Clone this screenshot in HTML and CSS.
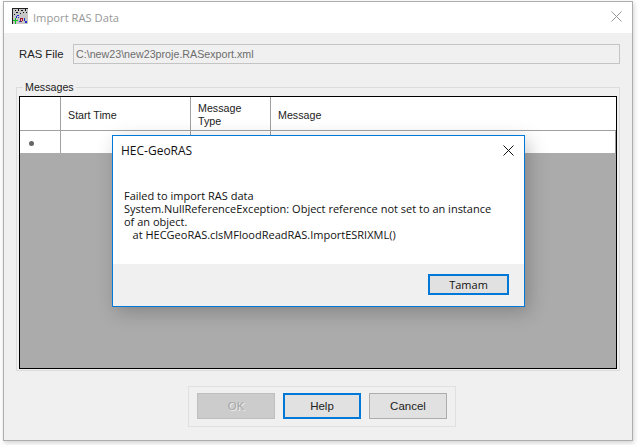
FILE: index.html
```html
<!DOCTYPE html>
<html lang="en">
<head>
<meta charset="utf-8">
<title>Import RAS Data</title>
<link rel="stylesheet" href="styles.css">
</head>
<body>
<div class="window">
  <header class="titlebar">
    <svg class="app-icon" viewBox="0 0 16 16" width="16" height="16" aria-hidden="true">
      <rect x="0" y="0" width="16" height="16" fill="#c6c6c6"/>
      <path d="M0 0h16v1H0zM0 0h1v16H0z" fill="#222"/>
      <path d="M3 2h1v1H3zM6 1h1v2H6zM9 2h2v1H9zM13 1h1v2h-1zM4 4h2v1H4zM11 4h1v1h-1zM14 4h1v1h-1zM8 5h1v1H8zM2 6h1v1H2z" fill="#111"/>
      <path d="M5 7h2v1H5zM4 8h1v2H4zM6 9h1v1H6zM12 10h1v3h-1zM13 13h2v2h-2zM7 13h2v1H7z" fill="#1c2fc8"/>
      <path d="M8 10h3v1H8zM8 11h1v2H8zM10 11h1v2h-1zM9 13h1v1H9z" fill="#b01030"/>
      <path d="M3 10h1v6H3zM1 12h5v1H1z" fill="#10c020"/>
    </svg>
    <span class="title">Import RAS Data</span>
    <svg class="close" viewBox="0 0 11 11" width="11" height="11" aria-hidden="true">
      <path d="M.5.5l10 10M10.5.5l-10 10" stroke="#999" fill="none"/>
    </svg>
  </header>
  <main class="content">
    <div class="file-row">
      <label class="file-label">RAS File</label>
      <div class="file-input">C:\new23\new23proje.RASexport.xml</div>
    </div>
    <fieldset class="group">
      <legend class="legend">Messages</legend>
      <div class="grid">
        <div class="head-row">
          <div class="cell c-row"></div>
          <div class="cell c-time">Start Time</div>
          <div class="cell c-type">Message<br>Type</div>
          <div class="cell c-msg">Message</div>
        </div>
        <div class="data-row">
          <div class="cell c-row"><span class="new-mark"></span></div>
          <div class="cell c-time"></div>
          <div class="cell c-type"></div>
          <div class="cell c-msg"></div>
        </div>
      </div>
    </fieldset>
    <div class="actions">
      <button class="btn btn-disabled" disabled>OK</button>
      <button class="btn btn-focus">Help</button>
      <button class="btn">Cancel</button>
    </div>
  </main>
  <section class="dialog">
    <div class="dialog-head">
      <span class="dialog-title">HEC-GeoRAS</span>
      <svg class="dialog-close" viewBox="0 0 11 11" width="11" height="11" aria-hidden="true">
        <path d="M.5.5l10 10M10.5.5l-10 10" stroke="#111" fill="none"/>
      </svg>
    </div>
    <div class="dialog-body">
      <p class="dialog-text">Failed to import RAS data
System.NullReferenceException: Object reference not set to an instance
of an object.
   at HECGeoRAS.clsMFloodReadRAS.ImportESRIXML()</p>
    </div>
    <div class="dialog-foot">
      <button class="dialog-btn">Tamam</button>
    </div>
  </section>
</div>
</body>
</html>
```
FILE: styles.css
```css
* { box-sizing: border-box; }
html, body { margin: 0; height: 100%; background: #fff; overflow: hidden; }
body { padding: 1px 0 0 3px; font-family: "Liberation Sans", sans-serif; font-size: 10.7px; color: #111; }

.window {
  position: relative;
  width: 630px;
  height: 440px;
  border: 1px solid #adadad;
  display: flex;
  flex-direction: column;
  box-shadow: 1px 2px 5px rgba(0,0,0,.18);
  background: #f0f0f0;
}

.titlebar {
  height: 31px;
  flex: none;
  background: #fff;
  display: flex;
  align-items: center;
  padding: 0 10px 3px 8px;
}
.app-icon { flex: none; margin-right: 5px; }
.title { flex: 1; font-family: "Open Sans", sans-serif; font-size: 11.2px; color: #999; position: relative; top: 1px; }
.close { flex: none; }

.content { flex: 1; display: flex; flex-direction: column; padding: 11px 12px 0 12px; min-height: 0; }

.file-row { display: flex; align-items: center; height: 20px; margin-left: 3px; flex: none; }
.file-label { width: 54px; flex: none; color: #222; font-size: 11.3px; }
.file-input {
  flex: 1;
  height: 20px;
  border: 1px solid #c4c4c4;
  padding: 2px 2px;
  color: #6d6d6d;
  line-height: 14px;
}

.group {
  margin: 16px 0 0 0;
  padding: 2px 2px 0 2px;
  height: 291px;
  flex: none;
  border: 1px solid #dcdcdc;
  min-width: 0;
}
.legend { padding: 0 2px; margin-left: 4px; line-height: 14px; color: #222; }

.grid {
  height: 273px;
  border: 1px solid #000;
  background: #ababab;
  display: flex;
  flex-direction: column;
}
.head-row, .data-row { display: flex; background: #fff; border-bottom: 1px solid #a0a0a0; flex: none; }
.head-row { height: 34px; }
.head-row .cell { padding-top: 3px; }
.data-row { height: 22px; border-bottom: 0; border-right: 1px solid #a0a0a0; }
.cell { border-right: 1px solid #a0a0a0; display: flex; align-items: center; padding-left: 7px; color: #222; line-height: 13px; }
.c-row { width: 41px; padding-left: 9px; }
.c-time { width: 130px; }
.c-type { width: 80px; }
.c-msg { flex: 1; border-right: 0; }
.new-mark { width: 5px; height: 5px; border-radius: 50%; background: #666; position: relative; top: 1px; }

.actions {
  align-self: flex-start;
  margin: 15px 0 0 172px;
  width: 268px;
  height: 41px;
  border: 1px solid #e0e0e0;
  display: flex;
  align-items: flex-start;
  gap: 8px;
  padding: 6px 8px 0;
  flex: none;
}
.btn {
  width: 78px;
  height: 26px;
  padding: 0;
  background: #e1e1e1;
  border: 1px solid #adadad;
  font: 11.5px "Liberation Sans", sans-serif;
  color: #222;
}
.btn-disabled { background: #ccc; border-color: #bfbfbf; color: #a6a6a6; text-shadow: 1px 1px 0 #eee; }
.btn-focus { border: 2px solid #0078d7; }

.dialog {
  position: absolute;
  left: 108px;
  top: 133px;
  width: 413px;
  height: 172px;
  background: #fff;
  border: 1px solid #0078d7;
  box-shadow: 4px 5px 18px rgba(0,0,0,.22);
  display: flex;
  flex-direction: column;
  font-family: "Open Sans", sans-serif;
  font-size: 11px;
  color: #111;
}
.dialog-head { height: 29px; flex: none; display: flex; align-items: center; justify-content: space-between; padding: 0 10px 0 8px; }
.dialog-title { font-size: 12px; }
.dialog-body { flex: 1; padding: 24px 11px 0 11px; }
.dialog-text { margin: 0; line-height: 13px; white-space: pre-wrap; }
.dialog-foot { height: 42px; flex: none; background: #f0f0f0; display: flex; justify-content: flex-end; align-items: flex-start; padding: 10px 15px 0 0; }
.dialog-btn {
  width: 81px;
  height: 21px;
  padding: 0;
  background: #e1e1e1;
  border: 2px solid #0078d7;
  font: 11px "Open Sans", sans-serif;
  color: #111;
}
```
